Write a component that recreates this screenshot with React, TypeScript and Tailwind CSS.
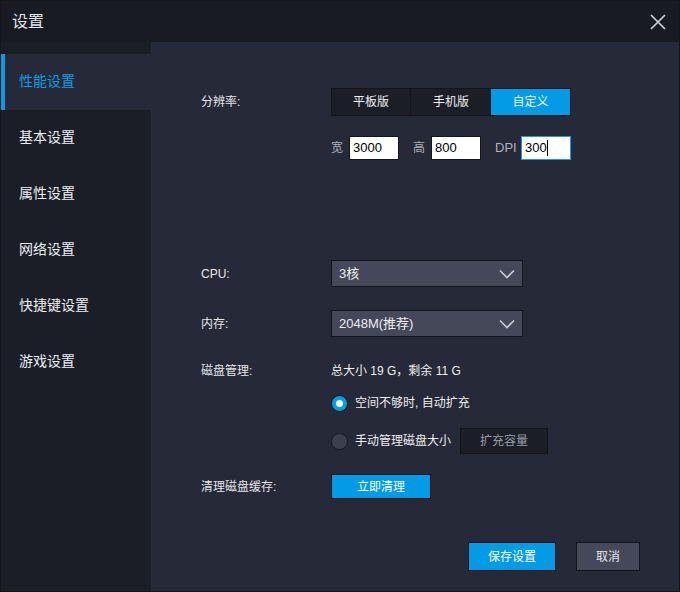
import React from "react";

const menu = ["性能设置", "基本设置", "属性设置", "网络设置", "快捷键设置", "游戏设置"];

const font = "font-['Liberation_Sans','Noto_Sans_CJK_SC',sans-serif]";

function Chevron() {
  return (
    <svg width="16" height="10" viewBox="0 0 16 10" className="shrink-0">
      <path d="M1 1.5 L8 8.5 L15 1.5" fill="none" stroke="#c9cbd4" strokeWidth="1.6" />
    </svg>
  );
}

function Select({ value }: { value: string }) {
  return (
    <div className="w-[192px] h-[27px] bg-[#444859] border border-[#14151c] flex items-center justify-between pl-[7px] pr-[7px] text-[13px] text-[#eceef3]">
      <span>{value}</span>
      <Chevron />
    </div>
  );
}

function Field({ value, active }: { value: string; active?: boolean }) {
  return (
    <div
      className={
        "w-[50px] h-[24px] bg-white flex items-center pl-[3px] text-[13px] text-black border " +
        (active ? "border-[#1a9be0]" : "border-[#14151c]")
      }
    >
      {value}
      {active && <span className="w-px h-[16px] bg-black" />}
    </div>
  );
}

function Row({ label, children, className }: { label?: string; children: React.ReactNode; className?: string }) {
  return (
    <div className={"flex items-center " + (className ?? "")}>
      <div className="w-[130px] shrink-0 text-[12px] text-[#e4e6ec]">{label}</div>
      {children}
    </div>
  );
}

export default function App() {
  return (
    <div className={"w-[680px] h-[592px] bg-[#191b23] flex flex-col border border-[#15161d] " + font}>
      {/* title bar */}
      <div className="h-[41px] shrink-0 flex items-center justify-between pl-[11px] pr-[13px]">
        <span className="text-[16px] text-[#e2e4ea]">设置</span>
        <svg width="16" height="16" viewBox="0 0 16 16">
          <path d="M1 1 L15 15 M15 1 L1 15" stroke="#cfd1d8" strokeWidth="1.7" />
        </svg>
      </div>

      <div className="flex flex-1 min-h-0">
        {/* sidebar */}
        <div className="w-[150px] shrink-0 bg-[#1b1e27] pt-[12px]">
          {menu.map((m, i) => (
            <div
              key={m}
              className={
                "h-[56px] flex items-center pl-[18px] pb-[2px] text-[14px] relative " +
                (i === 0 ? "bg-[#262937] text-[#109de3]" : "text-[#eceef2]")
              }
            >
              {i === 0 && <span className="absolute left-0 top-0 bottom-0 w-[4px] bg-[#0a9be3]" />}
              {m}
            </div>
          ))}
        </div>

        {/* main panel */}
        <div className="flex-1 bg-[#262937] pl-[50px] flex flex-col">
          <Row label="分辨率:" className="mt-[46px]">
            <div className="flex h-[28px] border border-[#14151c] text-[12px] text-[#eef0f4]">
              <div className="w-[79px] bg-[#1c1e27] flex items-center justify-center border-r border-[#14151c]">平板版</div>
              <div className="w-[80px] bg-[#1c1e27] flex items-center justify-center">手机版</div>
              <div className="w-[79px] bg-[#039be5] flex items-center justify-center">自定义</div>
            </div>
          </Row>

          <Row className="mt-[20px]">
            <div className="flex items-center text-[12px] text-[#aeb1bb]">
              <span className="w-[18px]">宽</span>
              <Field value="3000" />
              <span className="ml-[14px] w-[18px]">高</span>
              <Field value="800" />
              <span className="ml-[14px] w-[26px] text-[13px]">DPI</span>
              <Field value="300" active />
            </div>
          </Row>

          <Row label="CPU:" className="mt-[100px]">
            <Select value="3核" />
          </Row>

          <Row label="内存:" className="mt-[23px]">
            <Select value="2048M(推荐)" />
          </Row>

          <Row label="磁盘管理:" className="mt-[25px] h-[18px]">
            <span className="text-[12px] text-[#eceef2]">总大小 19 G，剩余 11 G</span>
          </Row>

          <Row className="mt-[13px] h-[20px]">
            <div className="flex items-center gap-[7px] text-[12px] text-[#eceef2]">
              <span className="w-[17px] h-[17px] rounded-full bg-[#079ce3] border border-[#12131a] flex items-center justify-center">
                <span className="w-[7px] h-[7px] rounded-full bg-white" />
              </span>
              空间不够时, 自动扩充
            </div>
          </Row>

          <Row className="mt-[15px]">
            <div className="flex items-center text-[12px] text-[#eceef2]">
              <span className="w-[17px] h-[17px] rounded-full bg-[#3c3f4e] border border-[#15161d] mr-[7px]" />
              手动管理磁盘大小
              <div className="ml-[9px] w-[88px] h-[26px] bg-[#1c1e27] border border-[#14151c] flex items-center justify-center text-[#9a9da7]">
                扩充容量
              </div>
            </div>
          </Row>

          <Row label="清理磁盘缓存:" className="mt-[20px]">
            <div className="w-[100px] h-[25px] bg-[#039be5] border border-[#14151c] flex items-center justify-center text-[12px] text-white">
              立即清理
            </div>
          </Row>

          <div className="mt-[43px] flex pl-[267px] gap-[20px] text-[12px]">
            <div className="w-[88px] h-[29px] bg-[#039be5] border border-[#14151c] flex items-center justify-center text-white">
              保存设置
            </div>
            <div className="w-[64px] h-[29px] bg-[#444859] border border-[#14151c] flex items-center justify-center text-[#e4e6ec]">
              取消
            </div>
          </div>
        </div>
      </div>
    </div>
  );
}
